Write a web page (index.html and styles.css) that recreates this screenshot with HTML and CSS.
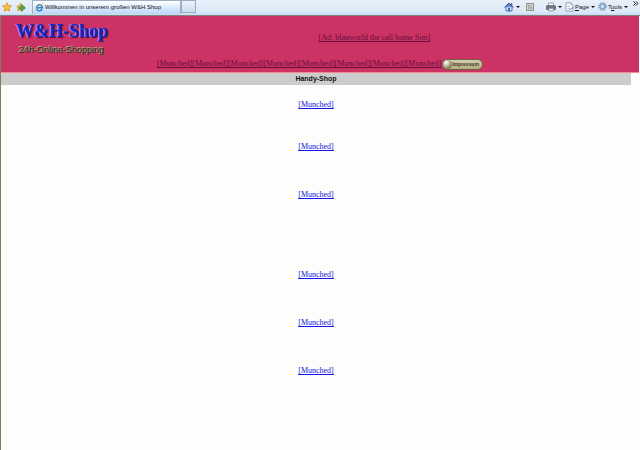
FILE: index.html
```html
<!DOCTYPE html>
<html lang="de">
<head>
<meta charset="utf-8">
<title>Willkommen in unserem großen W&amp;H Shop</title>
<link rel="stylesheet" href="styles.css">
</head>
<body>
<div class="toolbar">
  <button class="tool star" type="button" aria-label="Favoriten">
    <svg width="10" height="10" viewBox="0 0 10 10"><path d="M5 .7 6.3 3.6 9.4 4 7.1 6.1 7.7 9.2 5 7.7 2.3 9.2 2.9 6.1.6 4 3.7 3.6Z" fill="#ffc43d" stroke="#d98a20" stroke-width=".8"/></svg>
  </button>
  <button class="tool" type="button" aria-label="Hinzufügen">
    <svg width="10" height="10" viewBox="0 0 10 10"><path d="M4.5.8 6 3.4 9 5 7 6.5 6.5 9 4 8 1.5 8.5 2 6 .6 4.2 3.4 3.6Z" fill="#f3bd4b" stroke="#cf8f3b" stroke-width=".6"/><path d="M5 3H7V5H9V7H7V9H5V7H3V5H5Z" fill="#4ea64a" stroke="#2f7a3a" stroke-width=".4"/></svg>
  </button>
  <div class="tab">
    <svg width="9" height="9" viewBox="0 0 9 9"><path d="M7.2 6.2A3 3 0 1 1 7.5 4.7H2.2" fill="none" stroke="#2584d8" stroke-width="1.5"/><path d="M.8 8.2C-.5 6 6 .2 8.3 1" fill="none" stroke="#eab52e" stroke-width=".8"/></svg>
    <span>Willkommen in unserem großen W&amp;H Shop</span>
  </div>
  <div class="newtab"></div>
  <div class="commands">
    <button class="tool" type="button" aria-label="Startseite">
      <svg width="10" height="10" viewBox="0 0 10 10"><path d="M2 5V9H8V5" fill="#dce8fa" stroke="#4770b5"/><path d="M.6 5.3 5 1.2 9.4 5.3" fill="#5c8bd5" stroke="#2a4f9b"/><path d="M7 1h1.3v2.5H7z" fill="#a34a42"/><path d="M4.2 6h1.8v3H4.2z" fill="#365992"/></svg>
      <i class="arrow"></i>
    </button>
    <button class="tool feed" type="button" aria-label="Feeds">
      <svg width="8" height="8" viewBox="0 0 8 8"><rect x=".5" y=".5" width="7" height="7" fill="#d2d3d0" stroke="#92948f"/><path d="M2 2.2A4 4 0 0 1 6 6.2M2 4A2 2 0 0 1 4 6.2M2 5.7h.7" fill="none" stroke="#8b8c89" stroke-width=".8"/></svg>
    </button>
    <button class="tool" type="button" aria-label="Drucken">
      <svg width="10" height="10" viewBox="0 0 10 10"><path d="M2.5 1H7.5V4H2.5Z" fill="#f7f9fa" stroke="#808891" stroke-width=".7"/><path d="M.6 3.8H9.4V7.5H.6Z" fill="#737a80" stroke="#484d52" stroke-width=".7"/><path d="M2.5 6.3H7.5V9H2.5Z" fill="#eceee9" stroke="#656b70" stroke-width=".6"/></svg>
      <i class="arrow"></i>
    </button>
    <button class="tool" type="button">
      <svg width="9" height="10" viewBox="0 0 9 10"><path d="M1 .8H5.8L8 3V9.2H1Z" fill="#fbfcfe" stroke="#7c91ae" stroke-width=".8"/><path d="M5.8.8V3H8M2.5 4.5H5M2.5 6.5H5" fill="none" stroke="#8faac9" stroke-width=".7"/><path d="M4.5 8 8.3 5.2" stroke="#5c83ad"/></svg>
      <span><u>P</u>age</span>
      <i class="arrow"></i>
    </button>
    <button class="tool" type="button">
      <svg width="9" height="9" viewBox="0 0 9 9"><circle cx="4.5" cy="4.5" r="3.6" fill="none" stroke="#7e9cbb" stroke-width="1.4" stroke-dasharray="1.6 .7"/><circle cx="4.5" cy="4.5" r="2.4" fill="#cfe0ee" stroke="#7b9fc6" stroke-width="1.2"/></svg>
      <span>T<u>o</u>ols</span>
      <i class="arrow"></i>
    </button>
  </div>
  <button class="tool more" type="button" aria-label="Mehr">
    <svg width="6" height="5" viewBox="0 0 6 5"><path d="M.5.5 2.5 2.5.5 4.5M3 .5 5 2.5 3 4.5" fill="none" stroke="#111"/></svg>
  </button>
</div>
<div class="content">
  <header class="banner">
    <div class="top">
      <div class="logo">
        <div class="logo-name">W&amp;H-Shop</div>
        <div class="logo-sub">24h-Online-Shopping</div>
      </div>
      <div class="ad"><a href="#">[Ad: blauworld the call home Sim]</a></div>
    </div>
    <nav class="nav">
      <a href="#">[Munched]</a><a href="#">[Munched]</a><a href="#">[Munched]</a><a href="#">[Munched]</a><a href="#">[Munched]</a><a href="#">[Munched]</a><a href="#">[Munched]</a><a href="#">[Munched]</a>
      <button class="imprint" type="button"><span class="ball"></span>Impressum</button>
    </nav>
  </header>
  <h1 class="heading">Handy-Shop</h1>
  <main class="links">
    <a href="#">[Munched]</a>
    <a href="#">[Munched]</a>
    <a href="#" class="tall">[Munched]</a>
    <a href="#" class="huge">[Munched]</a>
    <a href="#" class="tall">[Munched]</a>
    <a href="#" class="tall">[Munched]</a>
  </main>
</div>
</body>
</html>
```
FILE: styles.css
```css
* { box-sizing: border-box; }

body {
  margin: 0;
  min-height: 100vh;
  display: flex;
  flex-direction: column;
  background: #fdfefb;
  color: #111;
  font-family: "Liberation Serif", serif;
  font-size: 8px;
  line-height: 10px;
}

.toolbar {
  display: flex;
  align-items: center;
  height: 16px;
  padding: 0 1px 2px 2px;
  background: linear-gradient(#e9f0f8, #dbe8f8 80%, #c4dcf7);
  border-bottom: 1px solid #85827c;
  font-family: "Liberation Sans", sans-serif;
  font-size: 6px;
}

.tool {
  display: flex;
  align-items: center;
  gap: 2px;
  margin: 0;
  padding: 0;
  border: 0;
  background: none;
  color: #111;
  font: inherit;
}

.star { margin-right: 4px; }

.tab {
  display: flex;
  align-items: center;
  gap: 1px;
  width: 149px;
  height: 14px;
  margin-left: 6px;
  padding-left: 2px;
  background: linear-gradient(#fff, #d5e6fb 60%, #bcd6f8);
  border: 1px solid #a0b0c4;
  border-bottom: 0;
  white-space: nowrap;
}

.newtab {
  width: 15px;
  height: 13px;
  background: linear-gradient(#edf4fc, #c9dcef);
  border: 1px solid #9aabbd;
}

.commands {
  display: flex;
  gap: 3px;
  margin-left: auto;
  margin-right: 5px;
}

.commands .tool { gap: 1px; }
.commands .feed { margin: 0 9px 0 3px; }

.arrow {
  margin-left: 1px;
  border: 2px solid transparent;
  border-top-color: #111;
  border-bottom: 0;
}

.more {
  align-self: flex-start;
  margin-top: 1px;
}

.content {
  flex: 1;
  border-left: 1px solid #85795f;
}

.banner {
  height: 57px;
  margin-right: 1px;
  background: #cc3264;
  border-bottom: 1px solid #f08a94;
}

.banner a { color: #640f3b; }

.top {
  display: flex;
  height: 42px;
}

.logo {
  flex: none;
  width: 109px;
  padding: 5px 0 0 15px;
  white-space: nowrap;
}

.logo-name {
  color: #1727d0;
  font-size: 18px;
  font-weight: bold;
  line-height: 20px;
  text-shadow: -1px 0 0 #a99ae0, 1px 1px 1px #4d1235;
}

.logo-sub {
  padding-left: 3px;
  color: #0d3a12;
  font-family: "Liberation Sans", sans-serif;
  font-size: 9px;
  line-height: 18px;
  text-shadow: -1px -1px 0 #b9b48a;
}

.ad {
  flex: 1;
  padding-top: 17px;
  text-align: center;
}

.nav {
  display: flex;
  justify-content: center;
  align-items: center;
  height: 12px;
}

.imprint {
  display: flex;
  align-items: center;
  width: 41px;
  height: 11px;
  padding: 0;
  margin-left: 1px;
  border: 1px solid #6c6345;
  border-radius: 6px;
  background: linear-gradient(#d5cfac, #b7ab83);
  color: #40371f;
  font-family: "Liberation Sans", sans-serif;
  font-size: 5px;
  font-weight: bold;
}

.ball {
  flex: none;
  width: 9px;
  height: 9px;
  border-radius: 50%;
  background: radial-gradient(circle at 35% 30%, #fff, #a9a27d 50%, #4c452d);
}

.heading {
  height: 12px;
  margin: 0 9px 0 0;
  background: #cbcccb;
  font: bold 7px/12px "Liberation Sans", sans-serif;
  text-align: center;
}

.links {
  display: flex;
  flex-direction: column;
  align-items: center;
  padding: 15px 9px 0 0;
}

.links a {
  margin-bottom: 32px;
  color: #1414e6;
}

.links .tall { margin-top: 6px; }
.links .huge { margin-top: 38px; }
```
